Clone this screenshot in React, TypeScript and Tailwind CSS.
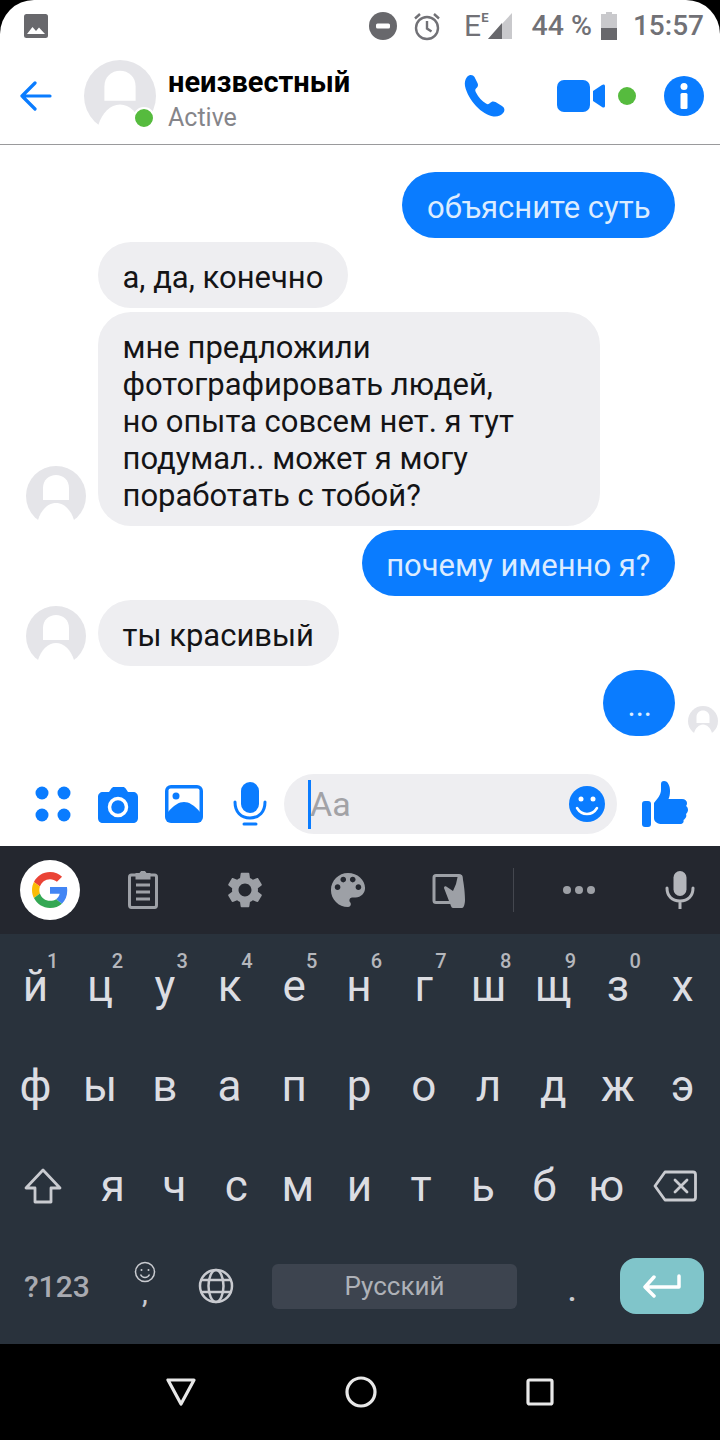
const BLUE = "#0a7cff";
const GREY = "#9da0a6";

const row1 = [["й", "1"], ["ц", "2"], ["у", "3"], ["к", "4"], ["е", "5"], ["н", "6"], ["г", "7"], ["ш", "8"], ["щ", "9"], ["з", "0"], ["х", ""]];
const row2 = ["ф", "ы", "в", "а", "п", "р", "о", "л", "д", "ж", "э"];
const row3 = ["я", "ч", "с", "м", "и", "т", "ь", "б", "ю"];

function Avatar({ size }: { size: number }) {
  return (
    <svg width={size} height={size} viewBox="0 0 60 60" className="shrink-0">
      <circle cx="30" cy="30" r="30" fill="#e5e5e9" />
      <g fill="#fff">
        <path d="M17 34V22C17 14 23 9 30 9s13 5 13 13v12z" />
        <path d="M12 54C15 44 22 37 30 37s15 7 18 17l1 7H11z" />
      </g>
    </svg>
  );
}

function Bubble({ mine, children }: { mine?: boolean; children: React.ReactNode }) {
  return (
    <div className={`rounded-[33px] px-[24.500px] pb-[12px] pt-[17px] text-[31px] leading-[37px] ${mine ? "bg-[#0a7cff] text-[#dcecff]" : "bg-[#eeeef1] text-[#141416]"}`}>
      {children}
    </div>
  );
}

function StatusBar() {
  return (
    <div className="flex h-[56px] items-center justify-between pl-[24px] pr-[16px] pt-[1px] text-[29px] font-medium text-[#717176]">
      <svg width="24" height="24" viewBox="0 0 24 24" className="mt-[-6px]">
        <rect width="24" height="24" rx="2.500" fill="#68686c" />
        <path d="M3 20l5.500-7 3.500 4 3-3.500L21 20z" fill="#fff" />
      </svg>
      <div className="flex items-center">
        <svg width="28" height="28" viewBox="0 0 28 28" className="mt-[-6px]">
          <circle cx="14" cy="14" r="14" fill="#68686c" />
          <rect x="7" y="11.500" width="14" height="5" rx="1.500" fill="#fff" />
        </svg>
        <svg width="30" height="30" viewBox="0 0 30 30" fill="none" stroke="#717176" strokeWidth="2.400" className="ml-[15px] mt-[-6px]">
          <circle cx="15" cy="17" r="11" />
          <path d="M15 10v7.500l4.500 3M3 7.500L8 3M27 7.500L22 3" />
        </svg>
        <span className="ml-[22px] mt-[-6px] text-[30px] font-normal leading-none">E</span>
        <span className="mt-[-22px] text-[13px] font-bold leading-none">E</span>
        <svg width="24" height="26" viewBox="0 0 24 26" className="mt-[-6px]">
          <path d="M24 0v26H0z" fill="#c9c9cc" />
          <path d="M14 10v16H0z" fill="#68686c" />
        </svg>
        <span className="ml-[19px] mt-[-5px] text-[28.500px] leading-none">44 %</span>
        <svg width="16" height="28" viewBox="0 0 16 28" className="ml-[9px] mt-[-6px]">
          <path d="M5 0h6v2h5v26H0V2h5z" fill="#c9c9cc" />
          <path d="M0 16h16v12H0z" fill="#68686c" />
        </svg>
        <span className="ml-[16px] mt-[-5px] text-[28px] leading-none">15:57</span>
      </div>
    </div>
  );
}

function Header() {
  return (
    <div className="flex h-[89px] items-center border-b border-[#9a9a9c] pb-[8px] pl-[20px]">
      <svg width="32" height="30" viewBox="0 0 32 30" fill="none" stroke={BLUE} strokeWidth="3.200" strokeLinecap="round" strokeLinejoin="round" className="shrink-0">
        <path d="M2 15h28M15 2L2 15l13 13" />
      </svg>
      <div className="relative ml-[32px] shrink-0">
        <Avatar size={72} />
        <div className="absolute left-[49px] top-[47px] h-[22px] w-[22px] rounded-full border-2 border-white bg-[#56bb3e]" />
      </div>
      <div className="ml-[12px] mt-[6px] w-[280px] shrink-0">
        <div className="text-[29px] font-bold leading-[34px] text-black">неизвестный</div>
        <div className="mt-[4px] text-[25px] leading-[30px] text-[#85858a]">Active</div>
      </div>
      <svg width="42" height="44" viewBox="0 0 42 44" className="ml-[16px] mt-[-1px] shrink-0">
        <path d="M3 3C6 0 9 1 10.500 3l3 6c1 2 .500 4-1.500 5.500-1 1-1 2 0 4 2.500 5 6 8.500 10 11 1.500 1 3 .800 4-.500 1.500-1.800 3.500-2 5.500-1l6.500 4c2.500 1.500 3.200 4.500 1.500 6.500-2 3-6 4.500-10 4C18 41 4 26 1 12 .500 8.500 1 5.500 3 3z" fill={BLUE} />
      </svg>
      <svg width="48" height="34" viewBox="0 0 48 34" className="ml-[51px] shrink-0">
        <rect width="33" height="32" y="1" rx="7" fill={BLUE} />
        <path d="M36 12l9-6c1.500-1 3-.500 3 1v20c0 1.500-1.500 2-3 1l-9-6z" fill={BLUE} />
      </svg>
      <div className="ml-[13px] h-[18px] w-[18px] shrink-0 rounded-full bg-[#56bb3e]" />
      <svg width="40" height="40" viewBox="0 0 40 40" className="ml-[28px] shrink-0">
        <circle cx="20" cy="20" r="20" fill={BLUE} />
        <circle cx="20" cy="10.500" r="3.500" fill="#fff" />
        <rect x="16.500" y="17" width="7" height="16" rx="1.500" fill="#fff" />
      </svg>
    </div>
  );
}

function Messages() {
  return (
    <div className="flex h-[617px] flex-col gap-[4px] pt-[27px]">
      <div className="flex justify-end pr-[45px]">
        <Bubble mine>объясните суть</Bubble>
      </div>
      <div className="flex pl-[98px]">
        <Bubble>а, да, конечно</Bubble>
      </div>
      <div className="flex items-end pl-[26px]">
        <Avatar size={60} />
        <div className="ml-[12px] w-[502px]">
          <Bubble>
            мне предложили
            <br />
            фотографировать людей,
            <br />
            но опыта совсем нет. я тут
            <br />
            подумал.. может я могу
            <br />
            поработать с тобой?
          </Bubble>
        </div>
      </div>
      <div className="flex justify-end pr-[45px]">
        <Bubble mine>почему именно я?</Bubble>
      </div>
      <div className="flex items-end pl-[26px]">
        <Avatar size={60} />
        <div className="ml-[12px]">
          <Bubble>ты красивый</Bubble>
        </div>
      </div>
      <div className="flex items-end justify-end pr-[2px]">
        <Bubble mine>
          <span className="inline-block w-[23px]">...</span>
        </Bubble>
        <div className="ml-[13px]">
          <Avatar size={30} />
        </div>
      </div>
    </div>
  );
}

function Composer() {
  return (
    <div className="flex h-[84px] items-center pl-[35px]">
      <svg width="36" height="36" viewBox="0 0 36 36" className="shrink-0" fill={BLUE}>
        <circle cx="7" cy="7" r="6.500" />
        <circle cx="29" cy="7" r="6.500" />
        <circle cx="7" cy="29" r="6.500" />
        <circle cx="29" cy="29" r="6.500" />
      </svg>
      <svg width="40" height="36" viewBox="0 0 40 36" className="ml-[27px] mt-[2px] shrink-0">
        <path d="M5 5h6l2-3c1-1.500 2-2 3-2h9c1 0 2 .500 3 2l2 3h5c3 0 5 2 5 5v21c0 3-2 5-5 5H5c-3 0-5-2-5-5V10c0-3 2-5 5-5z" fill={BLUE} />
        <circle cx="20" cy="20" r="8.500" fill="none" stroke="#fff" strokeWidth="3.500" />
      </svg>
      <svg width="38" height="38" viewBox="0 0 38 38" className="ml-[27px] mt-[-1px] shrink-0">
        <rect width="38" height="38" rx="6" fill={BLUE} />
        <rect x="3.500" y="3.500" width="31" height="25" rx="2" fill="#fff" />
        <path d="M3 27c6-7 11-10 16-10s10 3 16 10v8H3z" fill={BLUE} />
        <circle cx="11" cy="11" r="3.500" fill={BLUE} />
      </svg>
      <svg width="34" height="44" viewBox="0 0 34 44" className="ml-[30px] mt-[-1px] shrink-0" fill="none" stroke={BLUE} strokeWidth="3" strokeLinecap="round">
        <rect x="8" y="0" width="18" height="31" rx="9" fill={BLUE} stroke="none" />
        <path d="M2 20c0 10 6 16 15 16s15-6 15-16M11 42h12" />
      </svg>
      <div className="relative ml-[17px] flex h-[60px] w-[333px] shrink-0 items-center rounded-[30px] bg-[#eeeef1] pl-[24px]">
        <div className="h-[49px] w-[3px] bg-[#0a7cff]" />
        <span className="ml-[-1px] text-[34px] leading-none text-[#a2a2a6]">Aa</span>
        <svg width="36" height="36" viewBox="0 0 36 36" className="absolute left-[285px] top-[12px]">
          <circle cx="18" cy="18" r="18" fill={BLUE} />
          <circle cx="12" cy="13" r="2.500" fill="#fff" />
          <circle cx="24" cy="13" r="2.500" fill="#fff" />
          <path d="M8 22c3 5 6 6 10 6s7-1 10-6" fill="none" stroke="#fff" strokeWidth="2.500" strokeLinecap="round" />
        </svg>
      </div>
      <svg width="46" height="46" viewBox="0 0 46 46" className="ml-[25px] shrink-0" fill={BLUE}>
        <rect x="0" y="20" width="9" height="26" rx="3" />
        <path d="M12 22c3-4 7-8 7-13V3c0-2 1-3 3-3 4 0 6 5 6 10 0 3-.500 6-1.500 8H40c3 0 5 2 5 4 0 1.500-.500 2.500-1 3 1.500 1 2 2.500 2 4s-1 3-2 4c.500 1 .500 3-.500 4-1 1-1.500 2-2 2 .500 2-.500 4-3.500 4H20c-4 0-8-2-8-6z" />
      </svg>
    </div>
  );
}

function GoogleG() {
  return (
    <svg width="36" height="36" viewBox="0 0 48 48">
      <path fill="#EA4335" d="M24 9.500c3.540 0 6.710 1.220 9.210 3.600l6.850-6.850C35.900 2.380 30.470 0 24 0 14.620 0 6.510 5.380 2.560 13.220l7.980 6.190C12.430 13.720 17.740 9.500 24 9.500z" />
      <path fill="#4285F4" d="M46.980 24.550c0-1.570-.15-3.090-.38-4.550H24v9.020h12.940c-.58 2.960-2.260 5.480-4.780 7.180l7.730 6c4.510-4.180 7.090-10.360 7.090-17.650z" />
      <path fill="#FBBC05" d="M10.530 28.590c-.48-1.450-.76-2.990-.76-4.590s.27-3.140.76-4.590l-7.980-6.190C.92 16.460 0 20.120 0 24c0 3.880.92 7.540 2.560 10.780l7.970-6.190z" />
      <path fill="#34A853" d="M24 48c6.480 0 11.930-2.130 15.890-5.810l-7.730-6c-2.150 1.450-4.920 2.300-8.160 2.300-6.260 0-11.570-4.220-13.470-9.910l-7.980 6.190C6.510 42.620 14.620 48 24 48z" />
    </svg>
  );
}

function Toolbar() {
  return (
    <div className="flex h-[88px] items-center bg-[#24272f] pl-[20px]">
      <div className="flex h-[60px] w-[60px] shrink-0 items-center justify-center rounded-full bg-white">
        <GoogleG />
      </div>
      <svg width="30" height="38" viewBox="0 0 30 38" fill="none" stroke={GREY} strokeWidth="3" className="ml-[48px] shrink-0">
        <path d="M9 4H3.500C2 4 1.500 5 1.500 6v28c0 1.500 1 2.500 2 2.500h23c1 0 2-1 2-2.500V6c0-1-.500-2-2-2H21" />
        <path d="M9 7V3.500h3.500C13 2 14 1 15 1s2 1 2.500 2.500H21V7z" fill={GREY} />
        <path d="M8 14h14M8 21h14M8 28h14" />
      </svg>
      <svg width="36" height="36" viewBox="2 2 20 20" className="ml-[69px] shrink-0" fill={GREY}>
        <path d="M19.140 12.940c.04-.3.06-.61.06-.94 0-.32-.02-.64-.07-.94l2.030-1.580c.18-.14.23-.41.12-.61l-1.920-3.320c-.12-.22-.37-.29-.59-.22l-2.390.96c-.5-.38-1.030-.7-1.620-.94l-.36-2.540c-.04-.24-.24-.41-.48-.41h-3.840c-.24 0-.43.17-.47.41l-.36 2.540c-.59.24-1.130.57-1.620.94l-2.390-.96c-.22-.08-.47 0-.59.22L2.740 8.870c-.12.21-.08.47.12.61l2.030 1.580c-.05.3-.09.63-.09.94s.02.64.07.94l-2.030 1.580c-.18.14-.23.41-.12.61l1.920 3.320c.12.22.37.29.59.22l2.390-.96c.5.38 1.030.7 1.620.94l.36 2.540c.05.24.24.41.48.41h3.840c.24 0 .44-.17.47-.41l.36-2.540c.59-.24 1.130-.56 1.620-.94l2.390.96c.22.08.47 0 .59-.22l1.920-3.320c.12-.22.07-.47-.12-.61l-2.010-1.580zM12 15.600c-1.980 0-3.600-1.620-3.600-3.600s1.620-3.600 3.600-3.600 3.600 1.620 3.600 3.600-1.620 3.600-3.600 3.600z" />
      </svg>
      <svg width="36" height="36" viewBox="2.500 2.500 19 19" className="ml-[67px] shrink-0" fill={GREY}>
        <path d="M12 3c-4.970 0-9 4.030-9 9s4.030 9 9 9c.83 0 1.500-.67 1.500-1.500 0-.39-.15-.74-.39-1.010-.23-.26-.38-.61-.38-.99 0-.83.67-1.500 1.500-1.500H16c2.760 0 5-2.240 5-5 0-4.420-4.030-8-9-8zm-5.500 9c-.83 0-1.500-.67-1.500-1.500S5.670 9 6.500 9 8 9.670 8 10.500 7.330 12 6.500 12zm3-4C8.670 8 8 7.330 8 6.500S8.670 5 9.500 5s1.500.67 1.500 1.500S10.330 8 9.500 8zm5 0c-.83 0-1.500-.67-1.500-1.500S13.670 5 14.500 5s1.500.67 1.500 1.500S15.330 8 14.500 8zm3 4c-.83 0-1.500-.67-1.500-1.500S16.670 9 17.500 9s1.500.67 1.500 1.500-.67 1.500-1.500 1.500z" />
      </svg>
      <svg width="34" height="34" viewBox="0 0 34 34" className="ml-[66px] mt-[1px] shrink-0">
        <rect x="2" y="1.500" width="27" height="27" rx="2" fill="none" stroke={GREY} strokeWidth="3" />
        <path d="M12 14c0-2 2-2 3-1l6 4 3-7 2-9h4c1 4 3 15 3 25 0 3-1 8-3 8h-9c-2 0-2-3-4-7z" fill={GREY} />
      </svg>
      <div className="ml-[47px] h-[44px] w-[1px] shrink-0 bg-[#44474f]" />
      <svg width="34" height="10" viewBox="0 0 34 10" className="ml-[48px] shrink-0" fill={GREY}>
        <circle cx="5" cy="5" r="4" />
        <circle cx="17" cy="5" r="4" />
        <circle cx="29" cy="5" r="4" />
      </svg>
      <svg width="30" height="38" viewBox="0 0 30 38" className="ml-[69px] shrink-0" fill="none" stroke="#b4b6bb" strokeWidth="3" strokeLinecap="round">
        <rect x="8.500" y="0" width="13" height="25" rx="6.500" fill="#b4b6bb" stroke="none" />
        <path d="M2 17c0 8 5 13 13 13s13-5 13-13M15 30v8" />
      </svg>
    </div>
  );
}

function Key({ label, hint }: { label: string; hint?: string }) {
  return (
    <div className="relative flex items-center justify-center text-[44px] leading-none text-[#dcdde2]">
      {label}
      {hint ? <span className="absolute left-[44px] top-[-13px] text-[20px] font-medium text-[#b5b7bc]">{hint}</span> : null}
    </div>
  );
}

function Keys() {
  return (
    <div className="flex h-[410px] flex-col bg-[#29323c]">
      <div className="grid h-[100px] grid-cols-11 items-center pl-[3px] pr-[5px] pt-[4px]">
        {row1.map(([l, h]) => (
          <Key key={l} label={l} hint={h} />
        ))}
      </div>
      <div className="grid h-[101px] grid-cols-11 items-center pl-[3px] pr-[5px] pt-[2px]">
        {row2.map((l) => (
          <Key key={l} label={l} />
        ))}
      </div>
      <div className="flex h-[101px] items-center pl-[24px]">
        <svg width="38" height="36" viewBox="0 0 38 36" fill="none" stroke="#c9cbd0" strokeWidth="2.800" strokeLinejoin="round" className="shrink-0">
          <path d="M19 2L2 20h9v14h16V20h9z" />
        </svg>
        <div className="ml-[20px] grid w-[555px] shrink-0 grid-cols-9">
          {row3.map((l) => (
            <Key key={l} label={l} />
          ))}
        </div>
        <svg width="44" height="36" viewBox="0 0 44 32" fill="none" stroke="#c9cbd0" strokeWidth="2.800" strokeLinejoin="round" className="ml-[16px] shrink-0">
          <path d="M12 2h28c1.500 0 2.500 1 2.500 2.500v23c0 1.500-1 2.500-2.500 2.500H12L2 16z" />
          <path d="M22 10l12 12M34 10L22 22" strokeLinecap="round" />
        </svg>
      </div>
      <div className="flex h-[108px] items-start pl-[24px] pt-[22px]">
        <span className="mt-[14px] w-[90px] shrink-0 text-[30px] font-medium leading-none text-[#a9abb1]">?123</span>
        <div className="flex w-[62px] shrink-0 flex-col items-center">
          <svg width="22" height="22" viewBox="0 0 22 22" fill="none" stroke="#c9cbd0" strokeWidth="1.500" className="mt-[3px]">
            <circle cx="11" cy="11" r="9.500" />
            <circle cx="7.500" cy="9" r="1" fill="#c9cbd0" stroke="none" />
            <circle cx="14.500" cy="9" r="1" fill="#c9cbd0" stroke="none" />
            <path d="M6.500 13.500c1 2 3 3 4.500 3s3.500-1 4.500-3" />
          </svg>
          <span className="mt-[-2px] text-[26px] font-medium leading-none text-[#c9cbd0]">,</span>
        </div>
        <svg width="36" height="36" viewBox="0 0 36 36" fill="none" stroke="#c9cbd0" strokeWidth="2.500" className="ml-[22px] mt-[10px] shrink-0">
          <circle cx="18" cy="18" r="16" />
          <ellipse cx="18" cy="18" rx="7.500" ry="16" />
          <path d="M3.500 12h29M3.500 24h29" />
        </svg>
        <div className="ml-[38px] mt-[6px] flex h-[45px] w-[245px] shrink-0 items-center justify-center rounded-[6px] bg-[#3d444f] text-[26px] text-[#aeb1b7]">
          Русский
        </div>
        <span className="ml-[51px] mt-[20px] w-[8px] shrink-0 text-[28px] font-bold leading-none text-[#c9cbd0]">.</span>
        <div className="ml-[44px] flex h-[56px] w-[84px] shrink-0 items-center justify-center rounded-[16px] bg-[#80c5ca]">
          <svg width="38" height="24" viewBox="0 0 38 24" fill="none" stroke="#fff" strokeWidth="3.500" strokeLinejoin="round" strokeLinecap="round">
            <path d="M36 2v11H3M11 3L2 13l9 9" />
          </svg>
        </div>
      </div>
    </div>
  );
}

function NavBar() {
  return (
    <div className="flex h-[96px] items-center justify-center gap-[149px] bg-black">
      <svg width="30" height="28" viewBox="0 0 30 28" fill="none" stroke="#e8e8e8" strokeWidth="3.200" strokeLinejoin="round">
        <path d="M2 2h26L15 26z" />
      </svg>
      <svg width="32" height="32" viewBox="0 0 32 32" fill="none" stroke="#e8e8e8" strokeWidth="3.200">
        <circle cx="16" cy="16" r="14" />
      </svg>
      <svg width="28" height="28" viewBox="0 0 28 28" fill="none" stroke="#e8e8e8" strokeWidth="3.200" strokeLinejoin="round">
        <rect x="2" y="2" width="24" height="24" rx="1.500" />
      </svg>
    </div>
  );
}

export default function App() {
  return (
    <div className="h-[1440px] w-[720px] overflow-hidden bg-black font-['Roboto',sans-serif]">
      <div className="overflow-hidden rounded-t-[34px] bg-white">
        <StatusBar />
        <Header />
        <Messages />
        <Composer />
      </div>
      <Toolbar />
      <Keys />
      <NavBar />
    </div>
  );
}
